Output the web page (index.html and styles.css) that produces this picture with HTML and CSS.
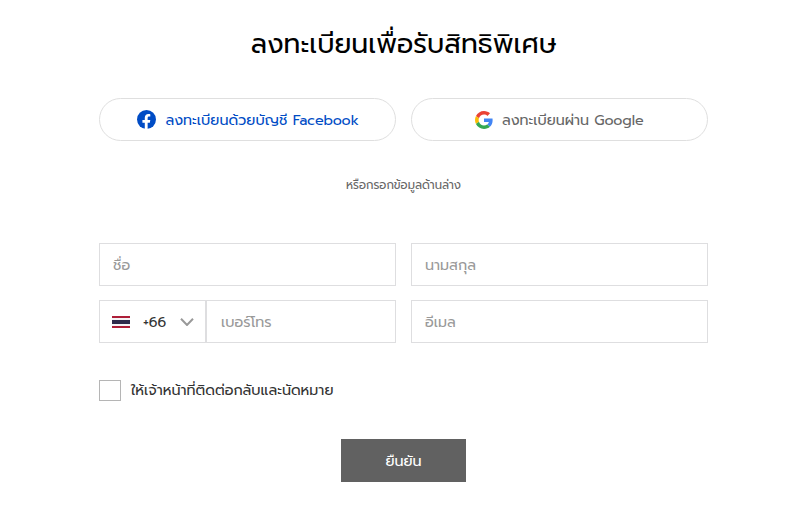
FILE: index.html
```html
<!DOCTYPE html>
<html lang="th">
<head>
<meta charset="utf-8">
<title>ลงทะเบียนเพื่อรับสิทธิพิเศษ</title>
<link rel="stylesheet" href="styles.css">
</head>
<body>
<main class="register">
  <h1 class="title"><span>ลงทะเบียนเพื่อรับสิทธิพิเศษ</span></h1>
  <div class="row">
    <button class="social facebook" type="button">
      <svg class="fb-icon" viewBox="0 0 20 20"><circle cx="10" cy="10" r="10" fill="#004cc5"/><path d="M8.200 20v-6.700H5.700v-2.900h2.500V8.200c0-2.600 1.500-4 3.800-4 1.100 0 2 .2 2 .2v2.500h-1.200c-1.200 0-1.600.7-1.600 1.500v2H14l-.5 2.900h-2.300V20z" fill="#fff"/></svg>
      <span class="fb-text">ลงทะเบียนด้วยบัญชี Facebook</span>
    </button>
    <button class="social google" type="button">
      <svg class="g-icon" viewBox="0 0 48 48"><path fill="#ea4335" d="M24 9.500c3.540 0 6.710 1.220 9.210 3.600l6.850-6.850C35.900 2.380 30.470 0 24 0 14.620 0 6.510 5.380 2.560 13.220l7.980 6.190C12.430 13.720 17.740 9.500 24 9.500z"/><path fill="#4285f4" d="M46.980 24.550c0-1.570-.15-3.090-.38-4.550H24v9.020h12.940c-.58 2.960-2.260 5.480-4.780 7.180l7.730 6c4.510-4.180 7.090-10.360 7.090-17.650z"/><path fill="#fbbc05" d="M10.530 28.590c-.48-1.450-.76-2.990-.76-4.590s.27-3.140.76-4.590l-7.980-6.190C.92 16.460 0 20.120 0 24s.92 7.540 2.560 10.780z"/><path fill="#34a853" d="M24 48c6.480 0 11.930-2.130 15.890-5.810l-7.730-6c-2.150 1.450-4.920 2.300-8.160 2.300-6.260 0-11.570-4.220-13.470-9.910l-7.980 6.190C6.510 42.620 14.620 48 24 48z"/></svg>
      <span class="g-text">ลงทะเบียนผ่าน Google</span>
    </button>
  </div>
  <p class="hint"><span>หรือกรอกข้อมูลด้านล่าง</span></p>
  <form>
    <div class="row fields">
      <div class="field"><span class="name">ชื่อ</span></div>
      <div class="field"><span class="surname">นามสกุล</span></div>
      <div class="phone">
        <div class="code">
          <svg class="flag" viewBox="0 0 18 12"><path fill="#ad1e38" d="M0 0h18v12H0z"/><path fill="#f4f3f5" d="M0 2h18v8H0z"/><path fill="#2d2a4a" d="M0 4h18v4H0z"/></svg>
          <span class="dial">+66</span>
          <svg class="chevron" viewBox="0 0 14 8"><path d="M1 .8 7 7 13 .8" fill="none" stroke="#999" stroke-width="2"/></svg>
        </div>
        <div class="field number"><span class="tel">เบอร์โทร</span></div>
      </div>
      <div class="field"><span class="email">อีเมล</span></div>
    </div>
    <div class="consent"><i class="box"></i><span class="consent-text">ให้เจ้าหน้าที่ติดต่อกลับและนัดหมาย</span></div>
    <button class="submit" type="button"><span>ยืนยัน</span></button>
  </form>
</main>
</body>
</html>
```
FILE: styles.css
```css
* { box-sizing: border-box; }
body { margin: 0; background: #fff; }
body, button { font-family: Prompt, "Noto Sans Thai", "Noto Sans Thai Looped", "Noto Sans", sans-serif; }
span { white-space: nowrap; }
.register { width: 609px; margin-left: 99px; padding-top: 23px; }
.title { margin: 0; height: 42px; line-height: 42px; text-align: center; font-size: 26.800px; font-weight: 400; color: #000; }
.row { display: grid; grid-template-columns: 297px 297px; gap: 14px 15px; margin-top: 33px; }
.social { display: flex; align-items: center; height: 43px; padding: 0 0 0 37px; border: 1px solid #dfdfdf; border-radius: 22px; background: #fff; font-size: 14.350px; line-height: 21px; }
.social span, .field span, .submit span, .code .dial { padding-top: 2px; }
.facebook { color: #004cc5; }
.google { color: #666; padding-left: 63px; font-size: 14.300px; }
.fb-icon { width: 19px; height: 19px; margin-right: 9.500px; }
.g-icon { width: 18px; height: 18px; margin-right: 9px; }
.hint { margin: 34px 0 0; height: 20px; line-height: 20px; text-align: center; font-size: 11.600px; color: #666; }
.fields { margin-top: 48px; }
.field { display: flex; align-items: center; height: 43px; padding-left: 13px; border: 1px solid #dedee0; font-size: 14.350px; line-height: 21px; color: #999; }
.phone { display: flex; }
.code { display: flex; align-items: center; width: 107px; height: 43px; padding-left: 12px; border: 1px solid #dedee0; font-size: 14.350px; line-height: 21px; color: #333; }
.flag { width: 18px; height: 12px; margin-right: 13px; }
.dial { width: 25px; }
.chevron { width: 14px; height: 8px; margin-left: 12px; }
.number { flex: 1; padding-left: 14px; }
.consent { display: flex; align-items: center; height: 21px; margin-top: 37px; font-size: 14.350px; line-height: 19px; color: #333; }
.consent-text { padding-bottom: 1px; }
.box { width: 22px; height: 21px; margin-right: 10px; border: 1px solid #b5b5b5; }
.submit { display: flex; align-items: center; justify-content: center; width: 125px; height: 43px; margin: 38px 0 0 242px; padding: 0; border: 0; background: #616161; color: #fff; font-size: 14.350px; line-height: 21px; font-weight: 400; }
```
